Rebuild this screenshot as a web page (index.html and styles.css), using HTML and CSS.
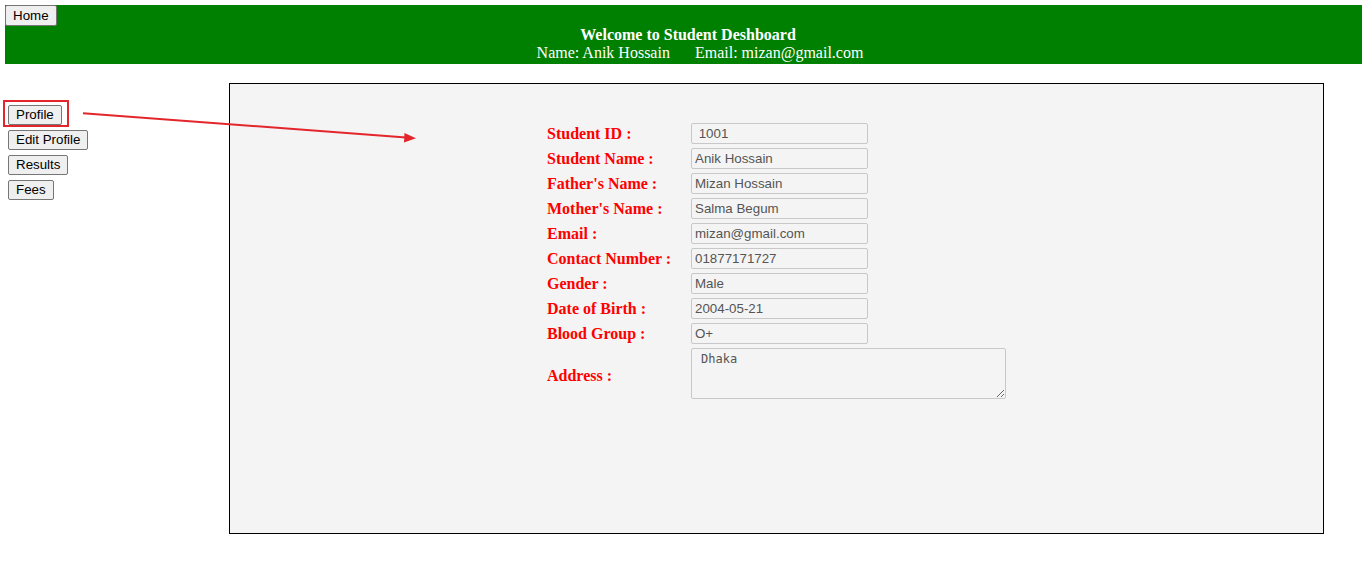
FILE: index.html
```html
<!DOCTYPE html>
<html>
<head>
<meta charset="utf-8">
<title>Student Deshboard</title>
<link rel="stylesheet" href="styles.css">
</head>
<body>
<header class="topbar">
  <button class="btn btn-home">Home</button>
  <div class="title">Welcome to Student Deshboard</div>
  <div class="userline"><span>Name: Anik Hossain</span><span>Email: mizan@gmail.com</span></div>
</header>
<div class="layout">
  <nav class="sidebar">
    <button class="btn nav-btn">Profile</button>
    <button class="btn nav-btn">Edit Profile</button>
    <button class="btn nav-btn">Results</button>
    <button class="btn nav-btn">Fees</button>
  </nav>
  <main class="panel">
    <form class="profile-form">
      <label class="lbl">Student ID :</label><input class="field" type="text" value=" 1001" readonly>
      <label class="lbl">Student Name :</label><input class="field" type="text" value="Anik Hossain" readonly>
      <label class="lbl">Father's Name :</label><input class="field" type="text" value="Mizan Hossain" readonly>
      <label class="lbl">Mother's Name :</label><input class="field" type="text" value="Salma Begum" readonly>
      <label class="lbl">Email :</label><input class="field" type="text" value="mizan@gmail.com" readonly>
      <label class="lbl">Contact Number :</label><input class="field" type="text" value="01877171727" readonly>
      <label class="lbl">Gender :</label><input class="field" type="text" value="Male" readonly>
      <label class="lbl">Date of Birth :</label><input class="field" type="text" value="2004-05-21" readonly>
      <label class="lbl">Blood Group :</label><input class="field" type="text" value="O+" readonly>
      <label class="lbl lbl-address">Address :</label><textarea class="area" readonly>Dhaka</textarea>
    </form>
  </main>
</div>
<svg class="annotation" width="1362" height="566" viewBox="0 0 1362 566">
  <rect x="4" y="101" width="64" height="25" fill="none" stroke="#e3262b" stroke-width="2"/>
  <line x1="83" y1="113.3" x2="406" y2="137.5" stroke="#e3262b" stroke-width="2"/>
  <polygon points="416,138.3 404.5,133 404,142.5" fill="#e3262b"/>
</svg>
</body>
</html>
```
FILE: styles.css
```css
html, body {
  margin: 0;
  padding: 0;
}
body {
  padding: 5px 0 0 5px;
  background: #fff;
  font-family: "Liberation Serif", "Times New Roman", serif;
  position: relative;
  min-height: 561px;
  box-sizing: border-box;
}
.topbar {
  background: #008000;
  color: #fff;
  height: 59px;
  display: flex;
  flex-direction: column;
  align-items: flex-start;
}
.btn {
  font-family: "Liberation Sans", Arial, sans-serif;
  font-size: 13.33px;
  color: #000;
  background: #efefef;
  border: 1px solid #767676;
  border-radius: 2px;
  padding: 0 7px;
  height: 20px;
  line-height: 16px;
  cursor: pointer;
}
.btn-home {
  height: 21px;
}
.title {
  align-self: stretch;
  text-align: center;
  font-weight: bold;
  font-size: 16px;
  line-height: 18px;
  padding-left: 9px;
}
.userline {
  align-self: stretch;
  display: flex;
  justify-content: center;
  gap: 25px;
  font-size: 16px;
  line-height: 18px;
  padding-left: 33px;
}
.layout {
  display: flex;
  margin-top: 19px;
}
.sidebar {
  width: 221px;
  padding: 22px 0 0 3px;
  display: flex;
  flex-direction: column;
  align-items: flex-start;
  gap: 5px;
}
.panel {
  width: 1093px;
  height: 449px;
  border: 1px solid #000;
  background: #f4f4f4;
}
.profile-form {
  display: grid;
  grid-template-columns: 144px auto;
  grid-auto-rows: 25px;
  align-items: center;
  justify-content: start;
  margin: 37px 0 0 317px;
}
.lbl {
  color: #ff0000;
  font-weight: bold;
  font-size: 16px;
  line-height: 18px;
  white-space: nowrap;
}
.lbl-address {
  grid-row: span 2;
  padding-top: 9px;
}
.field {
  width: 177px;
  height: 21px;
  box-sizing: border-box;
  border: 1px solid #c8c8c8;
  border-radius: 2px;
  background: #f4f4f4;
  padding: 0 3px;
  font-family: "Liberation Sans", Arial, sans-serif;
  font-size: 13.33px;
  color: #555;
  outline: none;
}
.area {
  grid-row: span 2;
  width: 315px;
  height: 51px;
  box-sizing: border-box;
  margin-top: 2px;
  border: 1px solid #c8c8c8;
  border-radius: 2px;
  background: #f4f4f4;
  padding: 3px 9px;
  font-family: "DejaVu Sans Mono", monospace;
  font-size: 12px;
  color: #555;
  outline: none;
  align-self: start;
}
.annotation {
  position: absolute;
  left: 0;
  top: 0;
  pointer-events: none;
}
```
